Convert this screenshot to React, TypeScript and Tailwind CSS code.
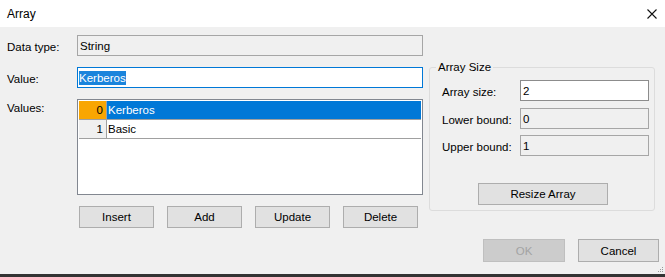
import React from 'react';

const Btn = ({ label, className = '', disabled = false }: { label: string; className?: string; disabled?: boolean }) => (
    <div
        className={
            'flex items-center justify-center border ' +
            (disabled ? 'bg-[#cccccc] border-[#bfbfbf] text-[#a3a3a3] ' : 'bg-[#e1e1e1] border-[#adadad] text-black ') +
            className
        }
    >
        {label}
    </div>
);

const App = () => {
    return (
        <div className="w-[665px] h-[277px] flex flex-col bg-[#f0f0f0] text-[11.5px] leading-[14px] text-black font-['Liberation_Sans',Arial,sans-serif] overflow-hidden">
            {/* title bar */}
            <div className="h-[27px] shrink-0 bg-white flex items-center justify-between pl-[7px] pr-[8px] text-[12px]">
                <span>Array</span>
                <svg width="10" height="10" viewBox="0 0 10 10">
                    <path d="M0.5 0.5 L9.5 9.5 M9.5 0.5 L0.5 9.5" stroke="#111" strokeWidth="1.1" fill="none" />
                </svg>
            </div>

            <div className="flex-1 flex flex-col pt-[8px] pl-[7px]">
                <div className="flex gap-[6px]">
                    {/* left column */}
                    <div className="w-[416px] flex flex-col">
                        <div className="flex items-center h-[21px]">
                            <span className="w-[70px] pt-[2px]">Data type:</span>
                            <div className="w-[346px] h-[21px] border border-[#a6a6a6] bg-[#f0f0f0] pl-[2px] flex items-center">
                                String
                            </div>
                        </div>
                        <div className="flex items-center h-[21px] mt-[11px]">
                            <span className="w-[70px] pt-[2px]">Value:</span>
                            <div className="w-[346px] h-[21px] border border-[#0078d7] bg-white pl-[1px] flex items-center">
                                <span className="bg-[#1a84dc] text-white">Kerberos</span>
                            </div>
                        </div>
                        <div className="flex mt-[11px]">
                            <span className="w-[70px] pt-[2px]">Values:</span>
                            <div className="w-[346px] h-[96px] border border-[#828790] bg-white p-[1px] flex flex-col">
                                <div className="flex h-[19px] border-b border-[#a0a0a0]">
                                    <div className="w-[28px] bg-[#f9a602] border-r border-[#a0a0a0] flex items-center justify-end pr-[3px]">
                                        0
                                    </div>
                                    <div className="flex-1 bg-[#0078d7] text-white flex items-center pl-[1px]">Kerberos</div>
                                </div>
                                <div className="flex h-[19px] border-b border-[#a0a0a0]">
                                    <div className="w-[28px] bg-[#f0f0f0] border-r border-[#a0a0a0] flex items-center justify-end pr-[3px]">
                                        1
                                    </div>
                                    <div className="flex-1 flex items-center pl-[1px]">Basic</div>
                                </div>
                            </div>
                        </div>
                        <div className="flex gap-[13px] mt-[11px] pl-[72px]">
                            <Btn label="Insert" className="w-[75px] h-[22px]" />
                            <Btn label="Add" className="w-[75px] h-[22px]" />
                            <Btn label="Update" className="w-[75px] h-[22px]" />
                            <Btn label="Delete" className="w-[75px] h-[22px]" />
                        </div>
                    </div>

                    {/* array size group */}
                    <fieldset className="w-[226px] self-start mt-[25px] border border-[#dcdcdc] rounded-[3px]">
                        <legend className="ml-[6px] px-[2px] leading-[14px]">Array Size</legend>
                        <div className="flex flex-col pl-[12px] pr-[5px] pt-[6px] pb-[5px]">
                            <div className="flex items-center">
                                <span className="w-[78px] pt-[2px]">Array size:</span>
                                <div className="w-[129px] h-[21px] border border-[#8c8c8c] bg-white pl-[2px] flex items-center">2</div>
                            </div>
                            <div className="flex items-center mt-[7px]">
                                <span className="w-[78px] pt-[2px]">Lower bound:</span>
                                <div className="w-[129px] h-[21px] border border-[#a6a6a6] bg-[#f0f0f0] pl-[2px] flex items-center">0</div>
                            </div>
                            <div className="flex items-center mt-[6px]">
                                <span className="w-[78px] pt-[2px]">Upper bound:</span>
                                <div className="w-[129px] h-[21px] border border-[#a6a6a6] bg-[#f0f0f0] pl-[2px] flex items-center">1</div>
                            </div>
                            <Btn label="Resize Array" className="w-[130px] h-[22px] mt-[27px] ml-[36px]" />
                        </div>
                    </fieldset>
                </div>

                <div className="flex justify-end gap-[13px] mt-[11px] pr-[6px]">
                    <Btn label="OK" disabled className="w-[82px] h-[23px]" />
                    <Btn label="Cancel" className="w-[81px] h-[23px]" />
                </div>

                <div className="flex-1 flex justify-end items-end pr-[1px] pb-[1px]">
                    <svg width="6" height="6" viewBox="0 0 6 6">
                        <rect x="4" y="0" width="1" height="1" fill="#9a9a9a" />
                        <rect x="2" y="2" width="1" height="1" fill="#9a9a9a" />
                        <rect x="4" y="2" width="1" height="1" fill="#9a9a9a" />
                        <rect x="0" y="4" width="1" height="1" fill="#9a9a9a" />
                        <rect x="2" y="4" width="1" height="1" fill="#9a9a9a" />
                        <rect x="4" y="4" width="1" height="1" fill="#9a9a9a" />
                    </svg>
                </div>
            </div>

            <div className="h-[3px] shrink-0 bg-[#333333]" />
        </div>
    );
};

export default App;
